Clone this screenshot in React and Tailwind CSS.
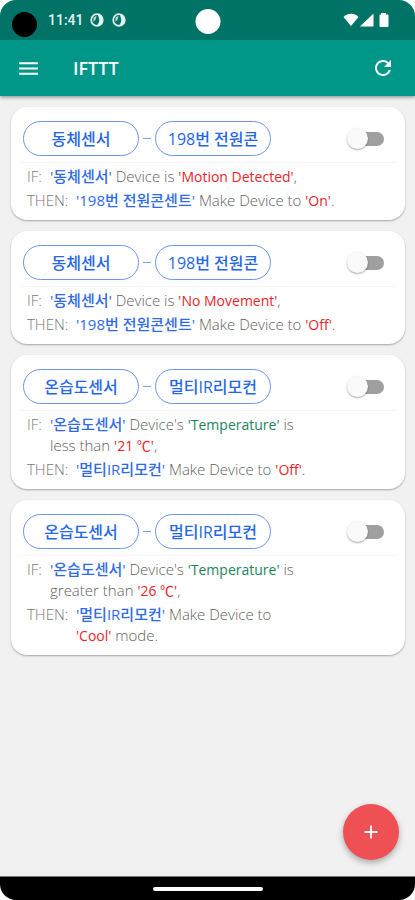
import React from "react";
import { MdMenu, MdRefresh, MdAdd } from "react-icons/md";

const rules = [
  {
    source: "동체센서",
    target: "198번 전원콘",
    condition: [
      [["blue", "'동체센서'"], ["gray", " Device is "], ["red", "'Motion Detected'"], ["gray", ","]],
    ],
    action: [
      [["blue", "'198번 전원콘센트'"], ["gray", " Make Device to "], ["red", "'On'"], ["gray", "."]],
    ],
  },
  {
    source: "동체센서",
    target: "198번 전원콘",
    condition: [
      [["blue", "'동체센서'"], ["gray", " Device is "], ["red", "'No Movement'"], ["gray", ","]],
    ],
    action: [
      [["blue", "'198번 전원콘센트'"], ["gray", " Make Device to "], ["red", "'Off'"], ["gray", "."]],
    ],
  },
  {
    source: "온습도센서",
    target: "멀티IR리모컨",
    condition: [
      [["blue", "'온습도센서'"], ["gray", " Device's "], ["green", "'Temperature'"], ["gray", " is"]],
      [["gray", "less than "], ["red", "'21 ℃'"], ["gray", ","]],
    ],
    action: [
      [["blue", "'멀티IR리모컨'"], ["gray", " Make Device to "], ["red", "'Off'"], ["gray", "."]],
    ],
  },
  {
    source: "온습도센서",
    target: "멀티IR리모컨",
    condition: [
      [["blue", "'온습도센서'"], ["gray", " Device's "], ["green", "'Temperature'"], ["gray", " is"]],
      [["gray", "greater than "], ["red", "'26 ℃'"], ["gray", ","]],
    ],
    action: [
      [["blue", "'멀티IR리모컨'"], ["gray", " Make Device to"]],
      [["red", "'Cool'"], ["gray", " mode."]],
    ],
  },
];

const tones = {
  blue: "font-medium text-[#2f6be8]",
  red: "text-sm leading-[18px] text-[#e8262c]",
  green: "text-sm leading-[18px] text-[#1c8560]",
  gray: "font-light text-[#5f5f5f]",
};

function Lines({ lines }) {
  return (
    <div>
      {lines.map((line, i) => (
        <p key={i} className="whitespace-pre">
          {line.map(([tone, text], j) => (
            <span key={j} className={tones[tone]}>{text}</span>
          ))}
        </p>
      ))}
    </div>
  );
}

function Chip({ children }) {
  return (
    <button
      type="button"
      className="h-[35px] w-[116px] rounded-full border border-[#6f94ee] text-base leading-6 font-medium whitespace-nowrap text-[#2567e8]"
    >
      {children}
    </button>
  );
}

function Toggle({ label }) {
  return (
    <label className="relative flex h-6 w-[37px] items-center">
      <input type="checkbox" aria-label={label} className="peer absolute inset-0 z-10 cursor-pointer opacity-0" />
      <span className="ml-1 h-[14px] w-[33px] rounded-full bg-[#9f9f9f]" />
      <span className="absolute left-0 size-[21px] rounded-full bg-[#fafafa] shadow-[0_1px_2px_rgba(0,0,0,0.35)] peer-checked:left-4" />
    </label>
  );
}

function RuleCard({ rule }) {
  return (
    <article className="rounded-2xl bg-white pt-[14px] pb-[9px] shadow-[0_1px_2px_rgba(0,0,0,0.32)]">
      <div className="flex items-center pr-[21px] pl-3">
        <Chip>{rule.source}</Chip>
        <span className="mx-1 h-px w-2 bg-[#7f9fee]" />
        <Chip>{rule.target}</Chip>
        <div className="ml-auto">
          <Toggle label={`${rule.source} - ${rule.target}`} />
        </div>
      </div>
      <div className="mx-2 mt-1.5 h-px bg-[#f5f5f5]" />
      <div className="mt-[3px] flex flex-col gap-[3px] px-4 text-[15px] leading-[21px]">
        <div className="flex gap-[7px]">
          <span className="w-4 font-light text-[#777]">IF:</span>
          <Lines lines={rule.condition} />
        </div>
        <div className="flex gap-[7px]">
          <span className="w-[42px] font-light text-[#777]">THEN:</span>
          <Lines lines={rule.action} />
        </div>
      </div>
    </article>
  );
}

function NotificationIcon() {
  return (
    <svg viewBox="0 0 14 14" className="size-[14px]" aria-hidden="true">
      <circle cx="7" cy="7" r="5.8" fill="none" stroke="#e2f2ef" strokeWidth="1.7" />
      <path d="M7.500 1C12 1 14 6 12 9.800C11 12 9 13 6.500 12.800C9 10.500 9.600 8 9 5.500C8.700 4 8 2.500 7.500 1Z" fill="#e2f2ef" />
      <path d="M3.500 4.500L6.500 2.800L5.600 6.500L3.500 9Z" fill="#b5dbd5" />
    </svg>
  );
}

function StatusBar() {
  return (
    <div className="relative flex h-10 items-center bg-[#007367] pr-[26px] pl-3">
      <span className="mt-2 size-[25px] rounded-full bg-black" />
      <span className="ml-[11px] font-[Roboto,sans-serif] text-sm font-medium text-[#e2f2ef]">11:41</span>
      <span className="ml-1.5 flex gap-2">
        <NotificationIcon />
        <NotificationIcon />
      </span>
      <span className="absolute top-[9px] left-1/2 size-[25px] -translate-x-1/2 rounded-full bg-white" />
      <svg viewBox="0 0 46 14" className="ml-auto h-[14px] w-[46px]" fill="#fff" aria-hidden="true">
        <path d="M0.500 4C4.500-0.300 11.500-0.300 15.500 4L8 13Z" />
        <path d="M30.500 0.500V13.500H17Z" />
        <path d="M38 1.500V0H43V1.500H44.500Q45.500 1.500 45.500 2.500V13Q45.500 14 44.500 14H37.500Q36.500 14 36.500 13V2.500Q36.500 1.500 37.500 1.500Z" />
      </svg>
    </div>
  );
}

export default function App() {
  return (
    <div className="min-h-screen bg-white font-['Open_Sans','Noto_Sans_CJK_KR',sans-serif]">
      <div className="relative flex min-h-screen flex-col overflow-hidden rounded-[16px] bg-[#f1f1f1]">
        <StatusBar />
        <header className="flex h-14 items-center bg-[#009688] pr-5 pl-4 text-white shadow-[0_1px_4px_rgba(0,0,0,0.45)]">
          <button type="button" aria-label="Menu"><MdMenu className="size-[25px]" /></button>
          <h1 className="ml-8 text-lg font-semibold">IFTTT</h1>
          <button type="button" aria-label="Refresh" className="ml-auto"><MdRefresh className="size-6" /></button>
        </header>
        <main className="flex flex-1 flex-col gap-[11px] px-[11px] pt-[11px] pr-[10px]">
          {rules.map((rule, i) => <RuleCard key={i} rule={rule} />)}
        </main>
        <button
          type="button"
          aria-label="Add"
          className="absolute right-4 bottom-10 flex size-14 items-center justify-center rounded-full bg-[#ef5053] text-white shadow-[0_3px_6px_rgba(0,0,0,0.3)]"
        >
          <MdAdd className="size-[22px]" />
        </button>
        <nav className="flex h-6 items-center justify-center border-t border-[#777] bg-black">
          <span className="h-1 w-[110px] rounded-full bg-white" />
        </nav>
      </div>
    </div>
  );
}
